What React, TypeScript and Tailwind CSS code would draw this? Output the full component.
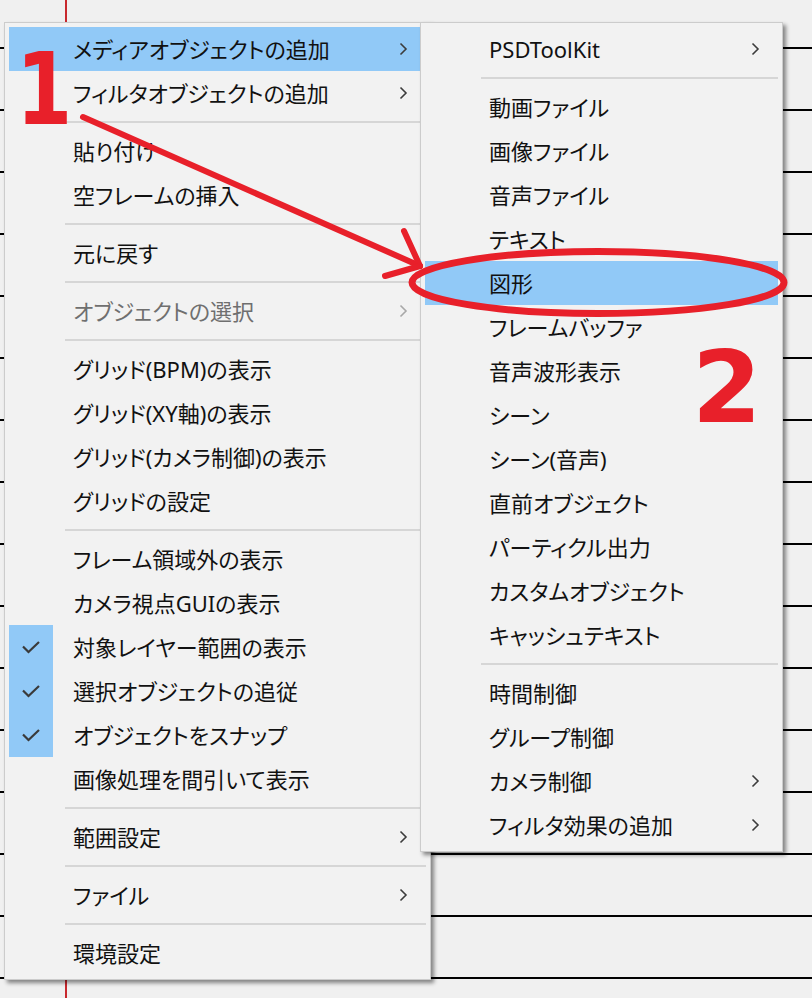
import React from "react";

type Item =
  | { sep: true }
  | { sep?: false; t: string; sub?: boolean; hl?: boolean; dis?: boolean; chk?: boolean };

const S: Item = { sep: true };

const mainItems: Item[] = [
  { t: "メディアオブジェクトの追加", sub: true, hl: true },
  { t: "フィルタオブジェクトの追加", sub: true },
  S,
  { t: "貼り付け" },
  { t: "空フレームの挿入" },
  S,
  { t: "元に戻す" },
  S,
  { t: "オブジェクトの選択", sub: true, dis: true },
  S,
  { t: "グリッド(BPM)の表示" },
  { t: "グリッド(XY軸)の表示" },
  { t: "グリッド(カメラ制御)の表示" },
  { t: "グリッドの設定" },
  S,
  { t: "フレーム領域外の表示" },
  { t: "カメラ視点GUIの表示" },
  { t: "対象レイヤー範囲の表示", chk: true },
  { t: "選択オブジェクトの追従", chk: true },
  { t: "オブジェクトをスナップ", chk: true },
  { t: "画像処理を間引いて表示" },
  S,
  { t: "範囲設定", sub: true },
  S,
  { t: "ファイル", sub: true },
  S,
  { t: "環境設定" },
];

const subItems: Item[] = [
  { t: "PSDToolKit", sub: true },
  S,
  { t: "動画ファイル" },
  { t: "画像ファイル" },
  { t: "音声ファイル" },
  { t: "テキスト" },
  { t: "図形", hl: true },
  { t: "フレームバッファ" },
  { t: "音声波形表示" },
  { t: "シーン" },
  { t: "シーン(音声)" },
  { t: "直前オブジェクト" },
  { t: "パーティクル出力" },
  { t: "カスタムオブジェクト" },
  { t: "キャッシュテキスト" },
  S,
  { t: "時間制御" },
  { t: "グループ制御" },
  { t: "カメラ制御", sub: true },
  { t: "フィルタ効果の追加", sub: true },
];

function Chevron({ dis }: { dis?: boolean }) {
  return (
    <svg width="9" height="14" viewBox="0 0 9 14" className="shrink-0">
      <polyline
        points="1.5,1.5 7,7 1.5,12.5"
        fill="none"
        stroke={dis ? "#a8a8a8" : "#3c3c3c"}
        strokeWidth="1.6"
      />
    </svg>
  );
}

function Check() {
  return (
    <svg width="20" height="14" viewBox="0 0 20 14">
      <polyline points="2,6.5 7.5,12 18,2" fill="none" stroke="#3a3a3a" strokeWidth="2.2" />
    </svg>
  );
}

function MenuList({ items }: { items: Item[] }) {
  return (
    <div className="flex flex-col">
      {items.map((it, i) => {
        if (it.sep) {
          return (
            <div key={i} className="h-[14px] flex items-center pl-[56px]">
              <div className="h-[2px] w-full bg-[#d6d6d6]" />
            </div>
          );
        }
        return (
          <div
            key={i}
            className={`h-[44px] flex items-center ${it.hl ? "bg-[#91c9f7]" : ""}`}
          >
            <div
              className={`w-[44px] h-full flex items-center justify-center ${
                it.chk ? "bg-[#91c9f7]" : ""
              }`}
            >
              {it.chk ? <Check /> : null}
            </div>
            <div
              className={`flex-1 pl-[20px] pr-[18px] flex items-center justify-between text-[22px] leading-[44px] whitespace-nowrap [font-feature-settings:'palt'] ${
                it.dis ? "text-[#6f6f6f]" : "text-[#111111]"
              }`}
            >
              <span>{it.t}</span>
              {it.sub ? <Chevron dis={it.dis} /> : null}
            </div>
          </div>
        );
      })}
    </div>
  );
}

export default function App() {
  const lines = Array.from({ length: 16 }, (_, i) => i);
  return (
    <div
      className="relative w-[812px] h-[998px] overflow-hidden bg-[#f0f0f0]"
      style={{ fontFamily: '"Noto Sans", "Noto Sans CJK JP", sans-serif' }}
    >
      {/* timeline background */}
      <div className="flex flex-col pt-[47px]">
        {lines.map((i) => (
          <div key={i} className="h-[62px] border-t-2 border-black" />
        ))}
      </div>

      {/* playhead */}
      <div className="absolute left-[65px] top-0 bottom-0 w-[2px] bg-[#c8282e]" />

      {/* main context menu */}
      <div className="absolute left-[4px] top-[22px] w-[427px] border border-[#cccccc] bg-[#f2f2f2] p-[4px] shadow-[3px_3px_4px_rgba(0,0,0,0.45)]">
        <MenuList items={mainItems} />
      </div>

      {/* sub menu */}
      <div className="absolute left-[420px] top-[22px] w-[363px] border border-[#cccccc] bg-[#f2f2f2] p-[4px] shadow-[3px_3px_4px_rgba(0,0,0,0.45)]">
        <MenuList items={subItems} />
      </div>

      {/* annotations */}
      <svg
        className="absolute left-0 top-0 pointer-events-none"
        width="812"
        height="998"
        viewBox="0 0 812 998"
      >
        <g stroke="#e8202a" strokeWidth="6" strokeLinecap="round" fill="none">
          <line x1="83" y1="117" x2="420" y2="266" />
          <line x1="404" y1="231" x2="420" y2="266" />
          <line x1="385" y1="276" x2="420" y2="266" />
        </g>
        <ellipse
          cx="598"
          cy="282.5"
          rx="186"
          ry="31"
          fill="none"
          stroke="#e8202a"
          strokeWidth="7"
        />
      </svg>
      <span
        className="absolute left-[16px] top-[40px] origin-left scale-x-[0.81] text-[100px] leading-none font-bold text-[#e8202a]"
        style={{ fontFamily: '"DejaVu Sans", sans-serif' }}
      >
        1
      </span>
      <span
        className="absolute left-[692px] top-[338px] text-[100px] leading-none font-bold text-[#e8202a]"
        style={{ fontFamily: '"DejaVu Sans", sans-serif' }}
      >
        2
      </span>
    </div>
  );
}
